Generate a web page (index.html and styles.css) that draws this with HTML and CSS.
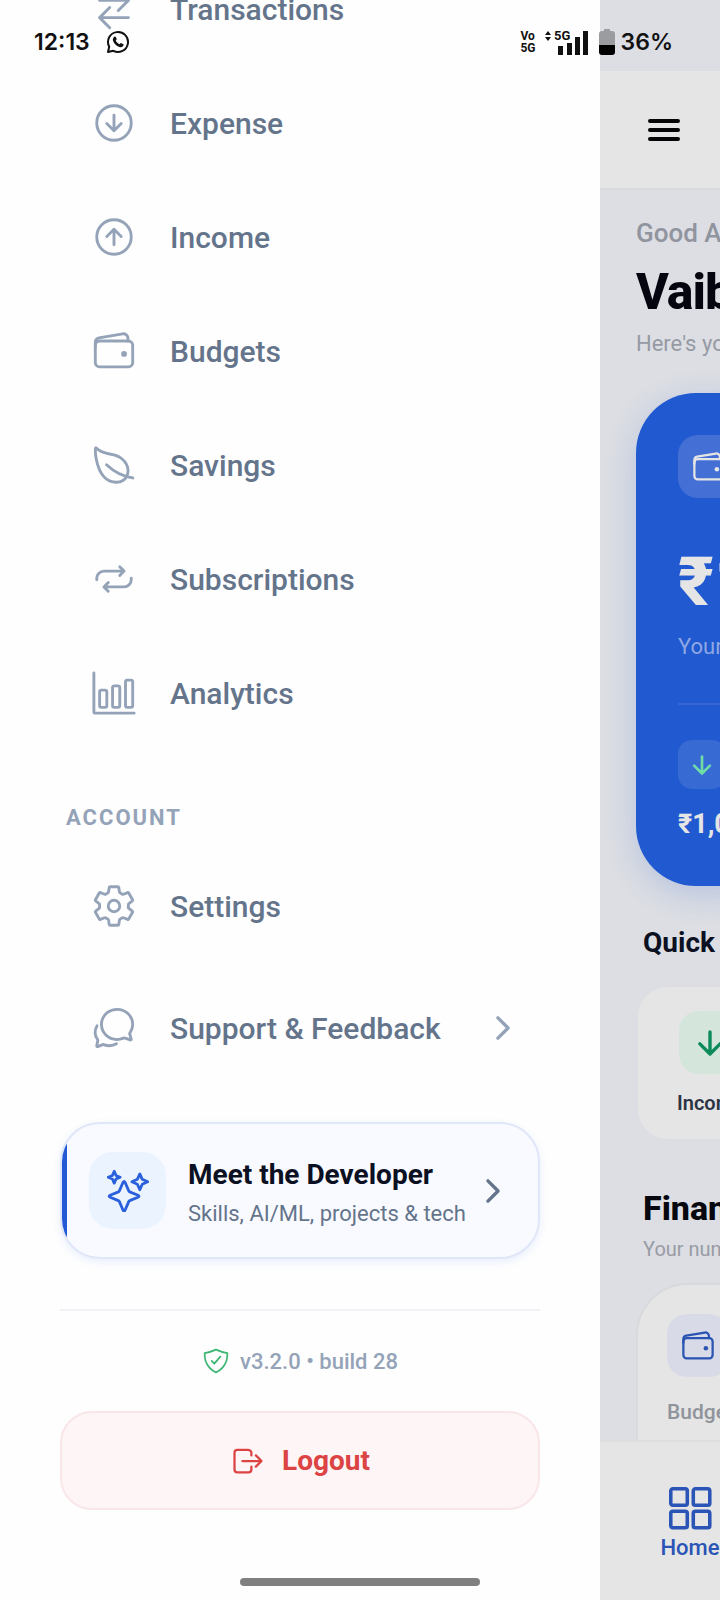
FILE: index.html
```html
<!DOCTYPE html>
<html lang="en">
<head>
<meta charset="utf-8">
<meta name="viewport" content="width=device-width, initial-scale=1">
<title>Menu</title>
<link rel="stylesheet" href="styles.css">
</head>
<body>
<svg class="defs" aria-hidden="true">
  <symbol id="swap" viewBox="0 0 512 512"><path d="M304 48l112 112-112 112M399 160H96M208 464L96 352l112-112M114 352h302"/></symbol>
  <symbol id="down-circle" viewBox="0 0 512 512"><circle cx="256" cy="256" r="192"/><path d="M176 262.6l80 79.4 80-79.4M256 331V170"/></symbol>
  <symbol id="up-circle" viewBox="0 0 512 512"><circle cx="256" cy="256" r="192"/><path d="M176 249.4l80-79.4 80 79.4M256 181v161"/></symbol>
  <symbol id="wallet" viewBox="0 0 512 512"><rect x="48" y="144" width="416" height="288" rx="48"/><path d="M411.36 144v-30A50 50 0 00352 64.9L88.64 109.85A50 50 0 0048 159v49"/><circle cx="368" cy="288" r="32" fill="currentColor" stroke="none"/></symbol>
  <symbol id="leaf" viewBox="0 0 512 512"><path d="M321.89 171.42C233 114 141 155.22 56 65.22c-19.8-21-8.3 235.5 98.1 332.7 77.79 71 197.9 63.08 238.4-5.92s18.28-163.17-70.61-220.58zM173 253c86 81 175 129 292 147"/></symbol>
  <symbol id="repeat" viewBox="0 0 512 512"><path d="M320 120l48 48-48 48M352 168H144a80.24 80.24 0 00-80 80v16M192 392l-48-48 48-48M160 344h208a80.24 80.24 0 0080-80v-16"/></symbol>
  <symbol id="chart" viewBox="0 0 512 512"><path d="M32 32v432a16 16 0 0016 16h432"/><rect x="96" y="224" width="80" height="192" rx="20"/><rect x="240" y="176" width="80" height="240" rx="20"/><rect x="384" y="112" width="80" height="304" rx="20"/></symbol>
  <symbol id="gear" viewBox="0 0 512 512"><circle cx="256" cy="256" r="64"/><path d="M416.39 256a154.34 154.34 0 01-1.53 20.79l45.21 35.46a10.81 10.81 0 012.45 13.75l-42.77 74a10.81 10.81 0 01-13.14 4.59l-44.9-18.08a16.11 16.11 0 00-15.17 1.75A164.48 164.48 0 01325 400.8a15.94 15.94 0 00-8.82 12.14l-6.73 47.89a11.08 11.08 0 01-10.68 9.17h-85.54a11.11 11.11 0 01-10.69-8.87l-6.72-47.82a16.07 16.07 0 00-9-12.22 155.3 155.3 0 01-21.46-12.57 16 16 0 00-15.11-1.71l-44.89 18.07a10.81 10.81 0 01-13.14-4.58l-42.77-74a10.8 10.8 0 012.45-13.75l38.21-30a16.05 16.05 0 006-14.08c-.36-4.17-.58-8.33-.58-12.5s.21-8.27.58-12.35a16 16 0 00-6.07-13.94l-38.19-30A10.81 10.81 0 0149.48 186l42.77-74a10.81 10.81 0 0113.14-4.59l44.9 18.08a16.11 16.11 0 0015.17-1.75A164.48 164.48 0 01187 111.2a15.94 15.94 0 008.82-12.14l6.73-47.89A11.08 11.08 0 01213.23 42h85.54a11.11 11.11 0 0110.69 8.87l6.72 47.82a16.07 16.07 0 009 12.22 155.3 155.3 0 0121.46 12.57 16 16 0 0015.11 1.71l44.89-18.07a10.81 10.81 0 0113.14 4.58l42.77 74a10.8 10.8 0 01-2.45 13.75l-38.21 30a16.05 16.05 0 00-6.05 14.08c.33 4.14.55 8.3.55 12.47z"/></symbol>
  <symbol id="chat" viewBox="0 0 512 512"><path d="M431 320.6c-1-3.6 1.2-8.6 3.3-12.2a33.68 33.68 0 012.1-3.1A162 162 0 00464 215c.3-92.2-77.5-167-173.7-167-83.9 0-153.9 57.1-170.3 132.9a160.7 160.7 0 00-3.7 34.2c0 92.3 74.8 169.1 171 169.1 15.3 0 35.9-4.6 47.2-7.7s22.5-7.2 25.4-8.3a26.44 26.44 0 019.3-1.7 26 26 0 0110.1 2l56.7 20.1a13.52 13.52 0 003.9 1 8 8 0 008-8 12.85 12.85 0 00-.5-2.7z"/><path d="M66.46 232a146.23 146.23 0 006.39 152.67c2.31 3.49 3.61 6.19 3.21 8s-11.93 61.87-11.93 61.87a8 8 0 002.71 7.68A8.17 8.17 0 0072 464a7.26 7.26 0 002.91-.6l56.21-22a15.7 15.7 0 0112 .2c18.94 7.38 39.88 12 60.83 12A159.21 159.21 0 00284 432.11"/></symbol>
  <symbol id="chevron" viewBox="0 0 512 512"><path d="M184 112l144 144-144 144" stroke-width="48"/></symbol>
  <symbol id="sparkles" viewBox="0 0 512 512"><path d="M265 255L220 150q-12-24-24 0L151 255q-3 9-12 12L38 308q-24 12 0 24l101 41q9 3 12 12l45 105q12 24 24 0l45-105q3-9 12-12l101-41q24-12 0-24l-101-41q-9-3-12-12zM110 66L88 16 66 66 16 88l50 22 22 50 22-50 50-22-50-22zM430 114L400 48l-30 66L304 144l66 30L400 240l30-66L496 144l-66-30z" stroke-width="34"/></symbol>
  <symbol id="shield" viewBox="0 0 512 512"><path d="M336 176L225.2 304 176 255.8M463.1 112.37C373.68 96.33 336.71 84.45 256 48c-80.71 36.45-117.68 48.33-207.1 64.37C32.7 369.13 240.58 457.79 256 464c15.42-6.21 223.3-94.87 207.1-351.63z"/></symbol>
  <symbol id="logout" viewBox="0 0 512 512"><path d="M304 336v40a40 40 0 01-40 40H104a40 40 0 01-40-40V136a40 40 0 0140-40h152c22.09 0 48 17.91 48 40v40M368 336l80-80-80-80M176 256h256"/></symbol>
  <symbol id="arrow-down" viewBox="0 0 512 512"><path d="M112 268l144 144 144-144M256 392V100" stroke-width="48"/></symbol>
  <symbol id="grid" viewBox="0 0 512 512"><g stroke-width="38"><rect x="51" y="51" width="176" height="176" rx="22"/><rect x="291" y="51" width="176" height="176" rx="22"/><rect x="51" y="291" width="176" height="176" rx="22"/><rect x="291" y="291" width="176" height="176" rx="22"/></g></symbol>
  <symbol id="menu" viewBox="0 0 36 24"><path d="M4 3h28M4 12h28M4 21h28" stroke-width="4"/></symbol>
</svg>

<div class="screen">
  <aside class="drawer">
    <nav class="nav">
      <a class="item" href="#"><svg class="icon"><use href="#swap"/></svg>Transactions</a>
      <a class="item" href="#"><svg class="icon"><use href="#down-circle"/></svg>Expense</a>
      <a class="item" href="#"><svg class="icon"><use href="#up-circle"/></svg>Income</a>
      <a class="item" href="#"><svg class="icon"><use href="#wallet"/></svg>Budgets</a>
      <a class="item" href="#"><svg class="icon"><use href="#leaf"/></svg>Savings</a>
      <a class="item" href="#"><svg class="icon"><use href="#repeat"/></svg>Subscriptions</a>
      <a class="item" href="#"><svg class="icon"><use href="#chart"/></svg>Analytics</a>
    </nav>
    <h2 class="section">ACCOUNT</h2>
    <nav class="nav-account">
      <a class="item" href="#"><svg class="icon"><use href="#gear"/></svg>Settings</a>
      <a class="item" href="#"><svg class="icon"><use href="#chat"/></svg>Support &amp; Feedback<svg class="chevron"><use href="#chevron"/></svg></a>
    </nav>
    <a class="dev" href="#">
      <span class="dev-tile"><svg class="icon"><use href="#sparkles"/></svg></span>
      <span class="dev-text"><strong class="dev-title">Meet the Developer</strong><span class="dev-sub">Skills, AI/ML, projects &amp; tech</span></span>
      <svg class="chevron"><use href="#chevron"/></svg>
    </a>
    <footer class="footer">
      <p class="version"><svg class="shield"><use href="#shield"/></svg>v3.2.0 • build 28</p>
      <button class="logout" type="button"><svg class="logout-icon"><use href="#logout"/></svg>Logout</button>
    </footer>
  </aside>

  <main class="page">
    <header class="topbar"><button class="menu" type="button" aria-label="Menu"><svg class="menu-icon"><use href="#menu"/></svg></button></header>
    <div class="feed">
      <p class="greet">Good Afternoon</p>
      <h1 class="name">Vaibhav</h1>
      <p class="hint">Here's your money</p>
      <section class="balance">
        <span class="tile glass"><svg class="tile-icon"><use href="#wallet"/></svg></span>
        <p class="amount">₹1,000</p>
        <p class="balance-note">Your balance</p>
        <div class="split">
          <span class="tile-small"><svg class="arrow-small"><use href="#arrow-down"/></svg></span>
          <p class="split-amount">₹1,000</p>
        </div>
      </section>
      <h2 class="quick-title">Quick Actions</h2>
      <section class="quick">
        <span class="tile green"><svg class="tile-icon"><use href="#arrow-down"/></svg></span>
        <p class="quick-label">Income</p>
      </section>
      <h2 class="finance-title">Financial</h2>
      <p class="finance-note">Your numbers</p>
      <section class="finance">
        <span class="tile lilac"><svg class="tile-icon"><use href="#wallet"/></svg></span>
        <p class="finance-label">Budget</p>
      </section>
    </div>
    <nav class="tabs"><a class="tab" href="#"><svg class="tab-icon"><use href="#grid"/></svg>Home</a></nav>
  </main>
</div>

<div class="status">
  <span class="clock">12:13</span>
  <svg class="whatsapp" viewBox="0 0 24 24"><path class="whatsapp-ring" d="M2 22l1.200-5.300A10 10 0 1 1 7.300 20.800z"/><path class="whatsapp-phone" d="M8.300 6.700c.5-.5 1.200-.4 1.500.2l.8 1.800c.2.500 0 .9-.9 1.900.9 1.700 2.100 2.800 3.800 3.600.9-1 1.300-1.300 1.800-1l1.800.9c.600.3.600.8.3 1.500-.600 1.300-2.300 1.900-4 1.300-3.200-1-5.400-3.200-6.400-6.200-.400-1.500.200-3.100 1.300-4z"/></svg>
  <span class="volte"><span>Vo</span><span>5G</span></span>
  <svg class="signal" viewBox="0 0 46 26"><path d="M1 6l3-4 3 4zM1 8l3 4 3-4z"/><text x="10" y="11">5G</text><path d="M14 17h5v9h-5zM23 14h5v12h-5zM31 8h5v18h-5zM39 2h5v24h-5z"/></svg>
  <svg class="battery" viewBox="0 0 16 26"><path d="M5 0h6v2h2a3 3 0 0 1 3 3v11H0V5a3 3 0 0 1 3-3h2z" fill="#9b9c9f"/><path d="M0 16h16v7a3 3 0 0 1-3 3H3a3 3 0 0 1-3-3z"/></svg>
  <span class="percent">36%</span>
</div>
<div class="home-bar"></div>
</body>
</html>
```

FILE: styles.css
```css
* { box-sizing: border-box; }

body {
  margin: 0;
  position: relative;
  background: #fefefe;
  font-family: Roboto, "Liberation Sans", sans-serif;
  color: #64748b;
}

p, h1, h2 { margin: 0; }
a { color: inherit; text-decoration: none; }
button { font: inherit; border: 0; background: none; padding: 0; }

svg {
  display: block;
  flex: none;
  fill: none;
  stroke: currentColor;
  stroke-width: 32;
  stroke-linecap: round;
  stroke-linejoin: round;
}

.defs { position: absolute; width: 0; height: 0; }

.screen {
  display: grid;
  grid-template-columns: 5fr 1fr;
  min-height: 100vh;
  overflow: hidden;
}

/* Drawer */
.drawer { min-width: 0; padding: 0 60px; background: #fefefe; }

/* The list is scrolled, so its first row sits partly above the window. */
.nav { display: grid; gap: 24px; margin-top: -36px; }
.nav-account { display: grid; gap: 32px; margin-top: 30px; }

.item {
  display: flex;
  align-items: center;
  height: 90px;
  padding: 0 19px 0 31px;
  font-size: 30px;
  font-weight: 500;
}

.icon { width: 46px; height: 46px; color: #94a3b8; }
.item .icon { margin-right: 33px; }
.chevron { width: 36px; height: 36px; margin-left: auto; color: #94a3b8; }

.section {
  margin: 67px 0 0 6px;
  font-size: 22px;
  line-height: 26px;
  font-weight: 700;
  letter-spacing: 2px;
  color: #94a3b8;
}

.dev {
  position: relative;
  display: flex;
  align-items: center;
  gap: 22px;
  margin-top: 49px;
  padding: 28px 27px;
  border: 2px solid #dfe7f8;
  border-radius: 40px;
  background: #f9faff;
  box-shadow: 0 3px 8px rgba(37, 99, 235, .1);
  overflow: hidden;
}
.dev::before {
  content: "";
  position: absolute;
  left: 0;
  top: 0;
  bottom: 0;
  width: 5px;
  background: #2459d6;
}
.dev-tile { display: grid; flex: none; place-items: center; width: 77px; height: 77px; border-radius: 24px; background: #ebf3ff; }
.dev-tile .icon { width: 42px; height: 42px; color: #2a60dc; }
.dev-text { display: grid; flex: 1; min-width: 0; gap: 8px; padding-top: 7px; white-space: nowrap; }
.dev-title { font-size: 28px; line-height: 32px; color: #0b1022; }
.dev-sub { font-size: 22px; line-height: 30px; }
.dev .chevron { margin-left: -22px; color: #64748b; }

.footer { margin-top: 50px; border-top: 2px solid #f0f2f6; }
.version {
  display: flex;
  align-items: center;
  justify-content: center;
  gap: 10px;
  height: 100px;
  font-size: 22px;
  font-weight: 500;
  color: #94a3b8;
}
.shield { width: 28px; height: 28px; color: #3db573; }
.logout {
  display: flex;
  align-items: center;
  justify-content: center;
  gap: 16px;
  width: 100%;
  height: 99px;
  border: 2px solid #f8e6e8;
  border-radius: 32px;
  background: #fef5f6;
  font-size: 28px;
  font-weight: 700;
  color: #dc4444;
}
.logout-icon { width: 36px; height: 36px; }

/* Dimmed page behind the drawer */
.page {
  display: flex;
  flex-direction: column;
  min-width: 0;
  height: 100vh;
  padding-top: 71px;
  background: #dcdee3;
  white-space: nowrap;
  overflow: hidden;
}
.topbar {
  display: flex;
  flex: none;
  align-items: center;
  height: 119px;
  padding-left: 46px;
  background: #e5e5e5;
  border-bottom: 2px solid #d9dade;
}
.menu-icon { width: 36px; height: 24px; color: #050508; }

.feed { flex: 1; min-height: 0; padding: 27px 0 0 36px; overflow: hidden; }
.greet { font-size: 26px; line-height: 32px; font-weight: 500; color: #90949e; }
.name { margin-top: 14px; font-size: 50px; line-height: 58px; font-weight: 800; letter-spacing: -1px; color: #04050f; }
.hint { margin-top: 8px; font-size: 22px; line-height: 30px; color: #959aa4; }

.balance {
  width: 600px;
  margin-top: 34px;
  padding: 42px 42px 45px;
  border-radius: 60px;
  background: #2159d0;
  box-shadow: 0 8px 32px rgba(33, 89, 208, .2);
  color: #e5e5e5;
}
.tile { display: grid; place-items: center; width: 62px; height: 63px; border-radius: 20px; }
.tile-icon { width: 36px; height: 36px; }
.glass { background: #4470d5; }
.amount { margin-top: 44px; font-size: 68px; line-height: 80px; font-weight: 800; }
.balance-note { margin-top: 10px; font-size: 22px; line-height: 30px; color: #8ea7e3; }
.split { margin-top: 41px; padding-top: 35px; border-top: 2px solid #3767d4; }
.tile-small { display: grid; place-items: center; width: 48px; height: 49px; border-radius: 14px; background: #376ad3; }
.arrow-small { width: 28px; height: 28px; color: #6fdca6; }
.split-amount { margin-top: 18px; font-size: 27px; line-height: 34px; font-weight: 700; }

.quick-title { margin: 40px 0 0 7px; font-size: 28px; line-height: 34px; font-weight: 700; color: #0b1022; }
.quick {
  width: 160px;
  margin: 27px 0 0 2px;
  padding: 24px 0 21px 41px;
  border-radius: 30px;
  background: #e5e5e5;
}
.green { background: #d4e5dc; color: #0c8a5a; }
.quick-label { margin: 14px 0 0 -2px; font-size: 20px; line-height: 30px; font-weight: 600; color: #2c3343; }

.finance-title { margin: 49px 0 0 7px; font-size: 34px; line-height: 40px; font-weight: 800; color: #06070f; }
.finance-note { margin: 6px 0 0 7px; font-size: 20px; line-height: 30px; color: #989ba3; }
.finance {
  width: 300px;
  height: 300px;
  margin-top: 19px;
  padding: 29px;
  border: 2px solid #d8d9dc;
  border-radius: 52px;
  background: #e5e5e5;
}
.lilac { background: #d8dbe7; color: #2a54b3; }
.finance-label { margin-top: 20px; font-size: 21px; line-height: 30px; font-weight: 500; color: #8f939b; }

.tabs { flex: none; height: 160px; padding: 42px 0 0 60px; border-top: 2px solid #dddee0; background: #e5e5e5; }
.tab { display: grid; justify-items: center; width: 60px; font-size: 22px; line-height: 28px; font-weight: 500; color: #2a55b6; }
.tab-icon { width: 48px; height: 48px; margin-bottom: 2px; }

/* System overlays */
.status {
  position: absolute;
  top: 28px;
  left: 34px;
  right: 47px;
  display: flex;
  align-items: center;
  height: 27px;
  font-family: Inter, sans-serif;
  font-size: 23px;
  font-weight: 600;
  color: #111;
}
.whatsapp { width: 24px; height: 24px; margin-left: 16px; stroke: #111; stroke-width: 2; }
.whatsapp-phone { fill: #111; stroke: none; }
.volte { display: grid; margin-left: auto; font: 700 12px/12px Roboto, sans-serif; }
.signal { width: 46px; height: 26px; margin-left: 8px; fill: #111; stroke: none; font: 700 13px Roboto, sans-serif; }
.battery { width: 16px; height: 26px; margin-left: 9px; fill: #000; stroke: none; }
.percent { margin-left: 6px; }

.home-bar {
  position: fixed;
  left: 50%;
  bottom: 14px;
  width: 240px;
  height: 8px;
  margin-left: -120px;
  border-radius: 4px;
  background: #808080;
}
```
